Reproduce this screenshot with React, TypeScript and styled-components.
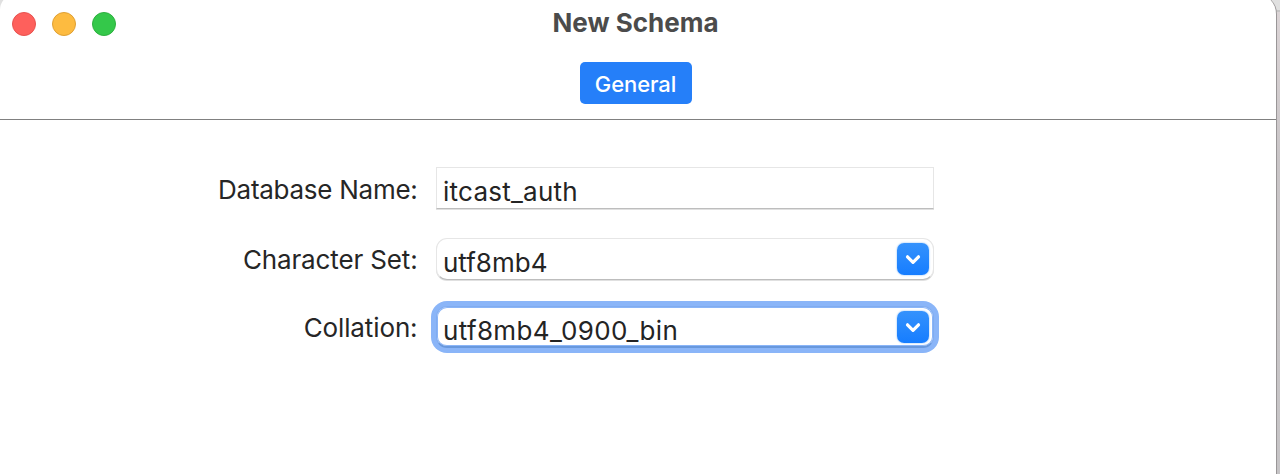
import React from 'react';
import styled, { createGlobalStyle, css } from 'styled-components';

const GlobalStyle = createGlobalStyle`
  *, *::before, *::after { box-sizing: border-box; }
  html, body { margin: 0; overflow: hidden; }
  body { font-family: Inter, "Liberation Sans", sans-serif; }
`;

const Desktop = styled.div`
  display: flex;
  align-items: flex-end;
  width: 1280px;
  height: 474px;
  overflow: hidden;
  background: linear-gradient(to bottom, #e0e0e0 10px, #c6c5c5 10px, #c6c5c5 12px, #dbd4d6 12px, #c9c5c7 160px, #c6c4c6 100%);
`;

const Window = styled.main`
  flex: none;
  width: 1277px;
  height: 480px;
  padding-top: 6px;
  background: #fff;
  border-right: 1px solid #999697;
  border-radius: 16px 20px 0 0;
`;

const Header = styled.header`
  display: grid;
  grid-template-columns: 1fr auto 1fr;
  grid-template-rows: 48px 1fr;
  height: 120px;
  border-bottom: 1px solid #808080;
`;

const TrafficLights = styled.div`
  display: flex;
  gap: 16px;
  padding: 12px 0 0 12px;
`;

const Light = styled.span<{ $fill: string; $rim: string }>`
  width: 24px;
  height: 24px;
  border-radius: 50%;
  background: ${(p) => p.$fill};
  border: 1px solid ${(p) => p.$rim};
`;

const Title = styled.h1`
  margin: 0;
  width: 171px;
  font-size: 26px;
  line-height: 46px;
  font-weight: 700;
  letter-spacing: 0;
  color: #4b4b4b;
  white-space: nowrap;
`;

const TabBar = styled.nav`
  grid-column: 1 / -1;
  padding: 14px 0 0 580px;
`;

const Tab = styled.button`
  display: block;
  width: 112px;
  height: 42px;
  padding: 2px 1px 0 0;
  border: 0;
  border-radius: 5px;
  background: #257ff9;
  color: #fff;
  font: 500 22px/40px Inter, sans-serif;
  letter-spacing: -0.1px;
`;

const Form = styled.form`
  padding-top: 47px;
`;

const Row = styled.div<{ $gap: number }>`
  display: grid;
  grid-template-columns: 417.5px 498px;
  column-gap: 18.5px;
  height: 42px;
  margin-bottom: ${(p) => p.$gap}px;
`;

const Label = styled.label<{ $spacing: number; $line: number }>`
  text-align: right;
  font-size: 26px;
  line-height: ${(p) => p.$line}px;
  letter-spacing: ${(p) => p.$spacing}px;
  color: #262626;
  white-space: nowrap;
`;

const Field = styled.div<{ $combo?: boolean; $focused?: boolean }>`
  display: flex;
  justify-content: space-between;
  height: 42px;
  padding: 0 4px 0 6px;
  border: 1px solid #e6e6e6;
  border-bottom-color: #bdbdbd;
  background: #fff;
  box-shadow: 0 1px 0 #e0e0e0;
  ${(p) => p.$combo && css`
    border-radius: 11px;
  `}
  ${(p) => p.$focused && css`
    border: 1px solid #80acf0;
    border-bottom: 2px solid #6898dd;
    box-shadow: 0 0 0 5px #8ab5f8, inset 0 0 0 1px #8ab5f8;
  `}
`;

const Value = styled.span<{ $spacing: number }>`
  font-size: 26px;
  line-height: 48px;
  letter-spacing: ${(p) => p.$spacing}px;
  color: #242424;
  white-space: nowrap;
`;

const DropButton = styled.button`
  display: grid;
  place-items: center;
  width: 32px;
  height: 32px;
  margin-top: 4px;
  padding: 0;
  border: 0;
  border-radius: 7px;
  background: linear-gradient(#3592fc, #167dff);
  box-shadow: 0 0 2px #77b1f5;
`;

const Chevron = () => (
  <svg width="32" height="32" viewBox="0 0 32 32" fill="none" stroke="#fff" strokeWidth="3.2" strokeLinecap="round" strokeLinejoin="round">
    <path d="M10.5 13.8 16 19.3 21.5 13.8" />
  </svg>
);

const rows = [
  { label: 'Database Name:', value: 'itcast_auth', labelSpacing: -0.27, labelLine: 45, valueSpacing: 0.25, gap: 29 },
  { label: 'Character Set:', value: 'utf8mb4', labelSpacing: -0.14, labelLine: 43, valueSpacing: 0, gap: 26, combo: true },
  { label: 'Collation:', value: 'utf8mb4_0900_bin', labelSpacing: -0.12, labelLine: 43, valueSpacing: 0.35, gap: 0, combo: true, focused: true },
];

export default function App() {
  return (
    <Desktop>
      <GlobalStyle />
      <Window>
        <Header>
          <TrafficLights>
            <Light $fill="#fe605c" $rim="#e7524f" />
            <Light $fill="#fdbb40" $rim="#dfa034" />
            <Light $fill="#34c84a" $rim="#2db03f" />
          </TrafficLights>
          <Title>New Schema</Title>
          <TabBar>
            <Tab type="button">General</Tab>
          </TabBar>
        </Header>
        <Form>
          {rows.map((row) => (
            <Row key={row.label} $gap={row.gap}>
              <Label $spacing={row.labelSpacing} $line={row.labelLine}>{row.label}</Label>
              <Field $combo={row.combo} $focused={row.focused}>
                <Value $spacing={row.valueSpacing}>{row.value}</Value>
                {row.combo && (
                  <DropButton type="button" aria-label={`Choose ${row.label}`}>
                    <Chevron />
                  </DropButton>
                )}
              </Field>
            </Row>
          ))}
        </Form>
      </Window>
    </Desktop>
  );
}
